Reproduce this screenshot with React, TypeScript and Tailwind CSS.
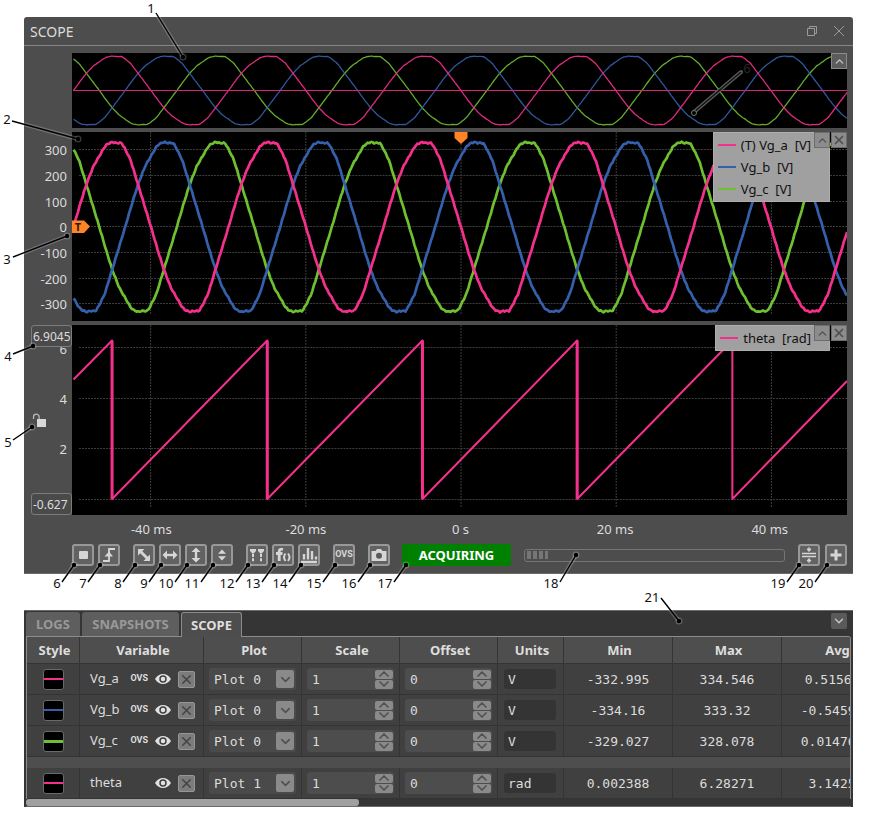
import { useState } from 'react'
import type { ReactNode } from 'react'
import { ChevronDown, ChevronUp, X } from 'lucide-react'

const PINK = '#f5308c'
const BLUE = '#3560ab'
const GREEN = '#6fc030'

const PERIOD = 154.8
const START = 1.5
const END = 774

// half wave of the grid voltage: [phase in px, height in px]
const HALF: [number, number][] = [
  [0, 0], [7, 24], [13, 43], [20, 61], [27, 73], [31, 80], [34, 83], [39, 85],
  [42, 84], [48, 84], [51, 79], [57, 67], [64, 44], [71, 21], [77.4, 0],
]

function half(p: number) {
  for (let i = 1; i < HALF.length; i++) {
    const [x0, y0] = HALF[i - 1]
    const [x1, y1] = HALF[i]
    if (p <= x1) return y0 + ((y1 - y0) * (p - x0)) / (x1 - x0)
  }
  return 0
}

function wave(x: number, shift: number) {
  const p = (((x - START - shift) % PERIOD) + PERIOD) % PERIOD
  return p < PERIOD / 2 ? half(p) : -half(p - PERIOD / 2)
}

function wavePath(shift: number, mid: number, scale: number, ripple: number) {
  let d = ''
  for (let x = START; x <= END; x += 1.5) {
    const y = mid - wave(x, shift) * scale + Math.sin(x * 1.4) * ripple
    d += `${d ? 'L' : 'M'}${x.toFixed(1)} ${y.toFixed(1)}`
  }
  return d
}

const THETA = 'M1.5 54.5L40 15.5V174L195 15.5V174L350 15.5V174L504.5 15.5V174L659.5 15.5V174L774 56'
const JUMPS = 'M40 15.5V174M195 15.5V174M350 15.5V174M504.5 15.5V174'
const COLS = [78.5, 233.5, 388.5, 543.5, 698.5]

const SHIFTS = [
  { color: GREEN, shift: -PERIOD / 3 },
  { color: BLUE, shift: PERIOD / 3 },
  { color: PINK, shift: 0 },
]

function Grid({ rows, bottom }: { rows: number[]; bottom: number }) {
  return (
    <g stroke="#3d3d3d" strokeWidth="1" strokeDasharray="2 1">
      {rows.map((y) => (
        <path key={y} d={`M7 ${y}H774`} />
      ))}
      {COLS.map((x) => (
        <path key={x} d={`M${x} 0V${bottom}`} />
      ))}
    </g>
  )
}

function ToolButton({ label, children }: { label: string; children: ReactNode }) {
  return (
    <button
      aria-label={label}
      className="h-[22px] w-[22px] shrink-0 rounded-[3px] border-2 border-[#989898] bg-[#626262] text-[#d6d6d6] flex items-center justify-center"
    >
      {children}
    </button>
  )
}

function Icon({ children }: { children: ReactNode }) {
  return (
    <svg width="18" height="18" viewBox="0 0 18 18" fill="none" className="shrink-0">
      {children}
    </svg>
  )
}

function PlotButton({ label, children }: { label: string; children: ReactNode }) {
  return (
    <button
      aria-label={label}
      className="h-4 w-4 border border-[#6c6c6c] bg-[#8c8c8c] text-[#505050] flex items-center justify-center"
    >
      {children}
    </button>
  )
}

function Legend({ items }: { items: { name: string; color: string }[] }) {
  return (
    <div className="absolute right-0 top-0 flex items-start">
      <ul className="border border-[#adadad] bg-[#a0a0a0] pl-1 pr-[18px] py-px text-[13px] leading-[22px] text-[#111111]">
        {items.map((item) => (
          <li key={item.name} className="flex items-center gap-[5px] whitespace-pre">
            <svg width="18" height="2" className="shrink-0">
              <rect width="18" height="2" fill={item.color} />
            </svg>
            {item.name}
          </li>
        ))}
      </ul>
      <div className="-ml-4 flex gap-px">
        <PlotButton label="Collapse legend">
          <ChevronUp size={13} strokeWidth={2.5} className="shrink-0" />
        </PlotButton>
        <PlotButton label="Remove plot">
          <X size={14} strokeWidth={3} className="shrink-0" />
        </PlotButton>
      </div>
    </div>
  )
}

function ScopeWindow() {
  return (
    <section className="rounded-t-[3px] bg-[#4d4d4d] border-b border-[#6a6a6a]">
      <header className="h-[29px] border-b border-[#858585] pl-[6px] pr-2 flex items-center justify-between">
        <h1 className="text-[14px] text-[#dcdcdc]">SCOPE</h1>
        <div className="flex items-center gap-[15px] text-[#9a9a9a]">
          <button aria-label="Restore">
            <svg width="12" height="12" viewBox="0 0 12 12" fill="none" stroke="currentColor">
              <path d="M1.5 3.500h7v7h-7zM3.500 3.500v-2h7v7h-2" />
            </svg>
          </button>
          <button aria-label="Close">
            <svg width="12" height="12" viewBox="0 0 12 12" fill="none" stroke="currentColor">
              <path d="M1 1l10 10M11 1L1 11" />
            </svg>
          </button>
        </div>
      </header>

      <div className="grid grid-cols-[48px_1fr] gap-y-1 pr-[6px] pt-[7px]">
        <div className="relative col-start-2 h-[75px] bg-black">
          <svg className="block h-full w-full" viewBox="0 0 774 75" preserveAspectRatio="none" fill="none">
            {SHIFTS.map((s) => (
              <path key={s.color} d={wavePath(s.shift, 37.5, 0.405, 0.1)} stroke={s.color} strokeWidth="1.3" opacity="0.9" />
            ))}
            <path d="M1 37.5H774" stroke="#d8247c" />
          </svg>
          <button
            aria-label="Collapse overview"
            className="absolute right-0 top-0 h-4 w-4 border border-[#8a8a8a] bg-[#5c5c5c] text-[#c4c4c4] flex items-center justify-center"
          >
            <ChevronUp size={13} strokeWidth={2.5} className="shrink-0" />
          </button>
        </div>

        <div className="h-[189px] pt-[6px] pr-[5px] text-right text-[13px] text-[#dcdcdc]">
          <div className="grid h-[180px] grid-rows-7 items-center">
            {['300', '200', '100', '0', '-100', '-200', '-300'].map((v) => (
              <span key={v}>{v}</span>
            ))}
          </div>
        </div>
        <div className="relative h-[189px] bg-black">
          <svg className="block h-full w-full" viewBox="0 0 774 189" preserveAspectRatio="none" fill="none">
            <Grid rows={[17.5, 43.5, 69.5, 94.5, 120.5, 146.5, 171.5]} bottom={183} />
            {SHIFTS.map((s) => (
              <path key={s.color} d={wavePath(s.shift, 95, 1, 0.6)} stroke={s.color} strokeWidth="2.7" strokeLinejoin="round" />
            ))}
            <path d="M382 0h13v6l-6.5 6-6.5-6z" fill="#ff8426" />
            <path d="M0 88.500h12l6 6-6 6.500H0z" fill="#ff8426" />
            <text x="6" y="99" textAnchor="middle" fontSize="11" fontWeight="bold" fill="#2b1a0c">
              T
            </text>
          </svg>
          <Legend
            items={[
              { name: '(T) Vg_a  [V]', color: PINK },
              { name: 'Vg_b  [V]', color: BLUE },
              { name: 'Vg_c  [V]', color: GREEN },
            ]}
          />
        </div>

        <div className="grid h-[190px] text-[13px] text-[#dcdcdc]">
          <div className="col-start-1 row-start-1 flex flex-col gap-[30px] pr-[5px] pt-[14px] text-right leading-5">
            <span>6</span>
            <span>4</span>
            <span>2</span>
          </div>
          <div className="relative col-start-1 row-start-1 flex flex-col items-start justify-between pl-[7px]">
            <input
              aria-label="Upper limit"
              defaultValue="6.9045"
              className="h-[22px] w-[41px] rounded-[3px] border border-[#7c7c7c] bg-[#4a4a4a] pl-px pt-px text-[12px]"
            />
            <button aria-label="Lock scale" className="ml-px">
              <svg width="15" height="15" viewBox="0 0 15 15" fill="none">
                <path d="M1.500 6V4a2.800 2.800 0 0 1 5.600 0v3" stroke="#b8b8b8" strokeWidth="1.300" />
                <rect x="5" y="6" width="9" height="8" fill="#d8d8d8" />
              </svg>
            </button>
            <input
              aria-label="Lower limit"
              defaultValue="-0.627"
              className="h-[22px] w-[41px] rounded-[3px] border border-[#7c7c7c] bg-[#4a4a4a] pl-px pt-px text-[12px]"
            />
          </div>
        </div>
        <div className="relative h-[190px] bg-black">
          <svg className="block h-full w-full" viewBox="0 0 774 190" preserveAspectRatio="none" fill="none">
            <Grid rows={[22.5, 73.5, 123.5, 174.5]} bottom={183} />
            <path d={THETA} stroke={PINK} strokeWidth="2" strokeLinejoin="round" />
            <path d={JUMPS} stroke={PINK} strokeWidth="3" />
          </svg>
          <Legend items={[{ name: 'theta  [rad]', color: PINK }]} />
        </div>
      </div>

      <div className="ml-[50px] mr-[6px] grid h-[29px] grid-cols-5 items-center pt-px text-center text-[13px] text-[#dcdcdc]">
        <span>-40 ms</span>
        <span>-20 ms</span>
        <span>0 s</span>
        <span>20 ms</span>
        <span>40 ms</span>
      </div>

      <div className="flex items-center gap-[13px] pb-[7px] pl-12 pr-[6px]">
        <div className="flex gap-1">
          <ToolButton label="Stop">
            <Icon>
              <rect x="5" y="5" width="9" height="8" rx="1" fill="currentColor" />
            </Icon>
          </ToolButton>
          <ToolButton label="Trigger">
            <Icon>
              <path d="M3 15h6V3H15" stroke="currentColor" strokeWidth="1.800" />
              <path d="M4.500 10.500l4.500-5 4 5z" fill="currentColor" />
            </Icon>
          </ToolButton>
        </div>
        <div className="flex gap-1">
          <ToolButton label="Zoom to fit">
            <Icon>
              <path d="M5 5l8 8" stroke="currentColor" strokeWidth="2.800" />
              <path d="M3 3h6.500L3 9.500zM15 15H8.500L15 8.500z" fill="currentColor" />
            </Icon>
          </ToolButton>
          <ToolButton label="Fit horizontally">
            <Icon>
              <path d="M4 9h10" stroke="currentColor" strokeWidth="2.400" />
              <path d="M1.500 9L6 4.500v9zM16.500 9L12 4.500v9z" fill="currentColor" />
            </Icon>
          </ToolButton>
          <ToolButton label="Fit vertically">
            <Icon>
              <path d="M9 4v10" stroke="currentColor" strokeWidth="2.400" />
              <path d="M9 1.500L4.500 6h9zM9 16.500L4.500 12h9z" fill="currentColor" />
            </Icon>
          </ToolButton>
          <ToolButton label="Stack vertically">
            <Icon>
              <path d="M9 3.500L5 7.800h8zM9 14.500L5 10.200h8z" fill="currentColor" />
            </Icon>
          </ToolButton>
        </div>
        <div className="flex gap-1">
          <ToolButton label="Cursors">
            <Icon>
              <path d="M2 3h6v2L5 8 2 5zM10 3h6v2l-3 3-3-3z" fill="currentColor" />
              <path d="M5 8v8M13 8v8" stroke="currentColor" strokeWidth="2" strokeDasharray="3 1.200" />
            </Icon>
          </ToolButton>
          <ToolButton label="Math functions">
            <Icon>
              <path d="M9 3.500C6.500 2.800 5.200 3.500 5.200 5.500V15M2 7.500h6.500" stroke="currentColor" strokeWidth="2.800" />
              <path d="M11.500 7.500c-2 2.500-2 5 0 7.500M14 7.500c2 2.500 2 5 0 7.500" stroke="currentColor" strokeWidth="2" />
            </Icon>
          </ToolButton>
          <ToolButton label="Statistics">
            <Icon>
              <path d="M1 16h16M4 13.500V8M8 13.500V2M12 13.500V5M16 13.500v-3" stroke="currentColor" strokeWidth="2.400" />
            </Icon>
          </ToolButton>
        </div>
        <ToolButton label="Oversampling">
          <span className="font-['Roboto',sans-serif] text-[9px] font-bold">OVS</span>
        </ToolButton>
        <ToolButton label="Snapshot">
          <Icon>
            <path d="M1.500 5h4L7 3h4l1.500 2h4v10h-15z" fill="currentColor" />
            <circle cx="9" cy="9.800" r="3" fill="#5a5a5a" />
          </Icon>
        </ToolButton>
        <button className="-ml-px h-[22px] w-[109px] shrink-0 rounded-[2px] bg-[#008000] pt-px text-[13px] font-bold text-white">
          ACQUIRING
        </button>
        <div
          role="progressbar"
          aria-label="Acquisition"
          className="flex h-[13px] flex-1 items-center gap-[2px] rounded-[3px] border border-[#757575] pl-[2px]"
        >
          <div className="h-2 w-1 bg-[#767676]"></div>
          <div className="h-2 w-1 bg-[#767676]"></div>
          <div className="h-2 w-1 bg-[#767676]"></div>
          <div className="h-2 w-[3px] bg-[#767676]"></div>
        </div>
        <div className="flex gap-[5px]">
          <ToolButton label="Align plots">
            <Icon>
              <path d="M2 7.500h14M2 10.500h14" stroke="currentColor" strokeWidth="1.500" />
              <path d="M9 1v3M7 3h4l-2 2.500zM9 17v-3M7 15h4L9 12.500z" stroke="currentColor" fill="currentColor" />
            </Icon>
          </ToolButton>
          <ToolButton label="Add plot">
            <Icon>
              <path d="M9 3.500v11M3.500 9h11" stroke="currentColor" strokeWidth="3" />
            </Icon>
          </ToolButton>
        </div>
      </div>
    </section>
  )
}

const MONO = "font-['DejaVu_Sans_Mono',monospace] text-[13px] text-[#dcdcdc]"

const variables = [
  { name: 'Vg_a', color: PINK, width: 2, ovs: true, plot: 'Plot 0', unit: 'V', min: '-332.995', max: '334.546', avg: '0.515612' },
  { name: 'Vg_b', color: BLUE, width: 2, ovs: true, plot: 'Plot 0', unit: 'V', min: '-334.16', max: '333.32', avg: '-0.545912' },
  { name: 'Vg_c', color: GREEN, width: 3, ovs: true, plot: 'Plot 0', unit: 'V', min: '-329.027', max: '328.078', avg: '0.0147612' },
  { name: 'theta', color: PINK, width: 2, ovs: false, plot: 'Plot 1', unit: 'rad', min: '0.002388', max: '6.28271', avg: '3.14251' },
]

type Variable = (typeof variables)[number]

function Stepper({ label, initial }: { label: string; initial: number }) {
  const [value, setValue] = useState(initial)
  return (
    <div className="mx-[5px] flex h-[22px] items-center rounded-[3px] bg-[#4d4d4d] pr-px">
      <input
        aria-label={label}
        value={value}
        onChange={(e) => setValue(Number(e.target.value) || 0)}
        className={`${MONO} w-0 flex-1 bg-transparent pl-[5px] pt-px`}
      />
      <div className="flex flex-col gap-px text-[#505050]">
        <button
          aria-label={`Increase ${label}`}
          onClick={() => setValue(value + 1)}
          className="flex h-[9px] w-[18px] items-center justify-center rounded-[2px] bg-[#8a8a8a]"
        >
          <ChevronUp size={16} strokeWidth={2.5} className="shrink-0" />
        </button>
        <button
          aria-label={`Decrease ${label}`}
          onClick={() => setValue(value - 1)}
          className="flex h-[9px] w-[18px] items-center justify-center rounded-[2px] bg-[#8a8a8a]"
        >
          <ChevronDown size={16} strokeWidth={2.5} className="shrink-0" />
        </button>
      </div>
    </div>
  )
}

function Row({ v }: { v: Variable }) {
  const cell = 'border-r border-b border-[#343434]'
  return (
    <tr className="h-[31px] bg-[#404040]">
      <td className={`${cell} p-0`}>
        <button
          aria-label={`${v.name} style`}
          className="mx-auto flex h-[21px] w-[21px] items-center rounded-[3px] border border-[#6a6a6a] bg-black"
        >
          <svg width="19" height="3">
            <rect width="19" height={v.width} fill={v.color} />
          </svg>
        </button>
      </td>
      <td className={`${cell} p-0`}>
        <div className="flex items-center pl-[10px] pr-2">
          <span className="flex-1 text-[13px] text-[#dcdcdc]">{v.name}</span>
          {v.ovs && (
            <button className="font-['Roboto',sans-serif] text-[9px] font-bold text-[#dedede]">OVS</button>
          )}
          <button aria-label={`Show ${v.name}`} className="ml-[7px]">
            <svg width="16" height="12" viewBox="0 0 16 12">
              <path d="M0 6C2 2.500 5 1 8 1s6 1.500 8 5c-2 3.500-5 5-8 5S2 9.500 0 6z" fill="#e2e2e2" />
              <circle cx="8" cy="6" r="3" fill="#e2e2e2" stroke="#404040" strokeWidth="1.500" />
            </svg>
          </button>
          <button
            aria-label={`Remove ${v.name}`}
            className="ml-[7px] flex h-[17px] w-[17px] items-center justify-center rounded-[2px] border border-[#969696] bg-[#7c7c7c] text-[#454545]"
          >
            <X size={15} strokeWidth={2.5} className="shrink-0" />
          </button>
        </div>
      </td>
      <td className={`${cell} p-0`}>
        <div className="relative mx-[5px]">
          <select
            aria-label={`${v.name} plot`}
            defaultValue={v.plot}
            className={`${MONO} block h-[22px] w-full appearance-none rounded-[3px] bg-[#4a4a4a] pl-[5px] pt-px`}
          >
            <option>Plot 0</option>
            <option>Plot 1</option>
          </select>
          <div className="pointer-events-none absolute right-[2px] top-[2px] flex h-[18px] w-[18px] items-center justify-center rounded-[2px] bg-[#8a8a8a] text-[#505050]">
            <ChevronDown size={15} strokeWidth={2.5} />
          </div>
        </div>
      </td>
      <td className={`${cell} p-0`}>
        <Stepper label={`${v.name} scale`} initial={1} />
      </td>
      <td className={`${cell} p-0`}>
        <Stepper label={`${v.name} offset`} initial={0} />
      </td>
      <td className={`${cell} p-0`}>
        <input
          aria-label={`${v.name} units`}
          defaultValue={v.unit}
          className={`${MONO} ml-[6px] block h-5 w-[52px] rounded-[3px] bg-[#343434] pl-1`}
        />
      </td>
      <td className={`${cell} ${MONO} p-0 pt-[2px] text-center`}>{v.min}</td>
      <td className={`${cell} ${MONO} p-0 pt-[2px] text-center`}>{v.max}</td>
      <td className={`${cell} ${MONO} p-0 pt-[2px] text-center`}>{v.avg}</td>
    </tr>
  )
}

function BottomPanel() {
  return (
    <section className="border-t border-[#6a6a6a] bg-[#353535] pl-[2px] pr-[2px]">
      <nav className="flex h-[25px] items-end gap-[2px] pt-px text-[13px] font-bold text-[#999999]">
        <button className="h-6 w-[54px] rounded-t-[3px] bg-[#5e5e5e] pt-[2px]">LOGS</button>
        <button className="h-6 w-[97px] rounded-t-[3px] bg-[#5e5e5e] pt-[2px]">SNAPSHOTS</button>
        <button className="relative z-10 -mb-px h-[25px] w-[61px] rounded-t-[3px] border border-b-0 border-[#8c8c8c] bg-[#4d4d4d] pt-[2px] text-[#dedede]">
          SCOPE
        </button>
        <button
          aria-label="Collapse panel"
          className="mb-[7px] ml-auto mr-1 flex h-4 w-4 items-center justify-center rounded-[2px] bg-[#5a5a5a] text-[#c4c4c4]"
        >
          <ChevronDown size={14} strokeWidth={2.5} />
        </button>
      </nav>
      <div className="overflow-hidden rounded-tr-[3px] border-l border-r border-t border-[#8c8c8c]">
        <table className="w-[864px] table-fixed border-separate border-spacing-0">
          <colgroup>
            <col className="w-[53px]" />
            <col className="w-[124px]" />
            <col className="w-[98px]" />
            <col className="w-[98px]" />
            <col className="w-[98px]" />
            <col className="w-[66px]" />
            <col className="w-[109px]" />
            <col className="w-[109px]" />
            <col className="w-[109px]" />
          </colgroup>
          <thead>
            <tr className="h-[27px] bg-[#4e4e4e] text-[13px] text-[#dedede]">
              {['Style', 'Variable', 'Plot', 'Scale', 'Offset', 'Units', 'Min', 'Max', 'Avg'].map((h) => (
                <th key={h} className="border-r border-b border-[#343434] p-0 pl-[3px] pt-[2px] font-bold">
                  {h}
                </th>
              ))}
            </tr>
          </thead>
          <tbody>
            {variables.slice(0, 3).map((v) => (
              <Row key={v.name} v={v} />
            ))}
            <tr className="h-[11px]">
              <td colSpan={9} className="bg-[#4e4e4e] p-0"></td>
            </tr>
            <Row v={variables[3]} />
          </tbody>
        </table>
      </div>
      <div className="border-b border-[#6a6a6a]">
        <div className="h-[7px] w-[333px] rounded-[3px] bg-[#a0a0a0]"></div>
      </div>
    </section>
  )
}

// n, text x, text baseline, line start x/y, dot x/y
const callouts = [
  [1, 151, 13, 156, 13, 183, 57],
  [2, 7, 124, 12, 121, 78, 139],
  [3, 7, 264, 13, 257, 67, 236],
  [4, 8, 361, 13, 354, 33, 346],
  [5, 8, 447, 13, 440, 32, 427],
  [6, 57, 588, 62, 582, 74, 565],
  [7, 83, 588, 88, 582, 100, 565],
  [8, 118, 588, 123, 582, 135, 565],
  [9, 144, 588, 149, 582, 161, 565],
  [10, 166, 588, 175, 582, 187, 565],
  [11, 192, 588, 201, 582, 213, 565],
  [12, 227, 588, 236, 582, 248, 565],
  [13, 253, 588, 262, 582, 274, 565],
  [14, 280, 588, 289, 582, 301, 565],
  [15, 314, 588, 323, 582, 335, 565],
  [16, 349, 588, 358, 582, 370, 565],
  [17, 385, 588, 394, 582, 406, 565],
  [18, 551, 588, 560, 582, 576, 555],
  [19, 778, 588, 787, 582, 799, 565],
  [20, 806, 588, 815, 582, 827, 565],
  [21, 652, 602, 661, 598, 679, 621],
]

function Callouts() {
  return (
    <svg className="pointer-events-none absolute left-0 top-0" width="879" height="822" fill="none">
      <path d="M694 112L741 72" stroke="#5c5c5c" strokeWidth="4" strokeLinecap="round" />
      <path d="M694 112L741 72" stroke="#111111" strokeWidth="1.500" />
      <circle cx="694" cy="113" r="2.500" fill="#000000" stroke="#777777" />
      <text x="747" y="73" textAnchor="middle" fontSize="13" fill="#262626">
        6
      </text>
      {callouts.map(([n, tx, ty, x1, y1, x2, y2]) => (
        <g key={n}>
          <path d={`M${x1} ${y1}L${x2} ${y2}`} stroke="#ffffff" strokeOpacity="0.22" strokeWidth="4" />
          <circle cx={x2} cy={y2} r="3.500" fill="#ffffff" fillOpacity="0.22" />
          <path d={`M${x1} ${y1}L${x2} ${y2}`} stroke="#000000" strokeWidth="1.400" />
          <circle cx={x2} cy={y2} r="2.200" fill="#000000" />
          <text x={tx} y={ty} textAnchor="middle" fontSize="13" fill="#111111">
            {n}
          </text>
        </g>
      ))}
    </svg>
  )
}

export default function App() {
  return (
    <main className="relative bg-white pb-4 pl-6 pr-[26px] pt-[17px] font-['Noto_Sans',sans-serif]">
      <ScopeWindow />
      <div className="mt-9">
        <BottomPanel />
      </div>
      <Callouts />
    </main>
  )
}
